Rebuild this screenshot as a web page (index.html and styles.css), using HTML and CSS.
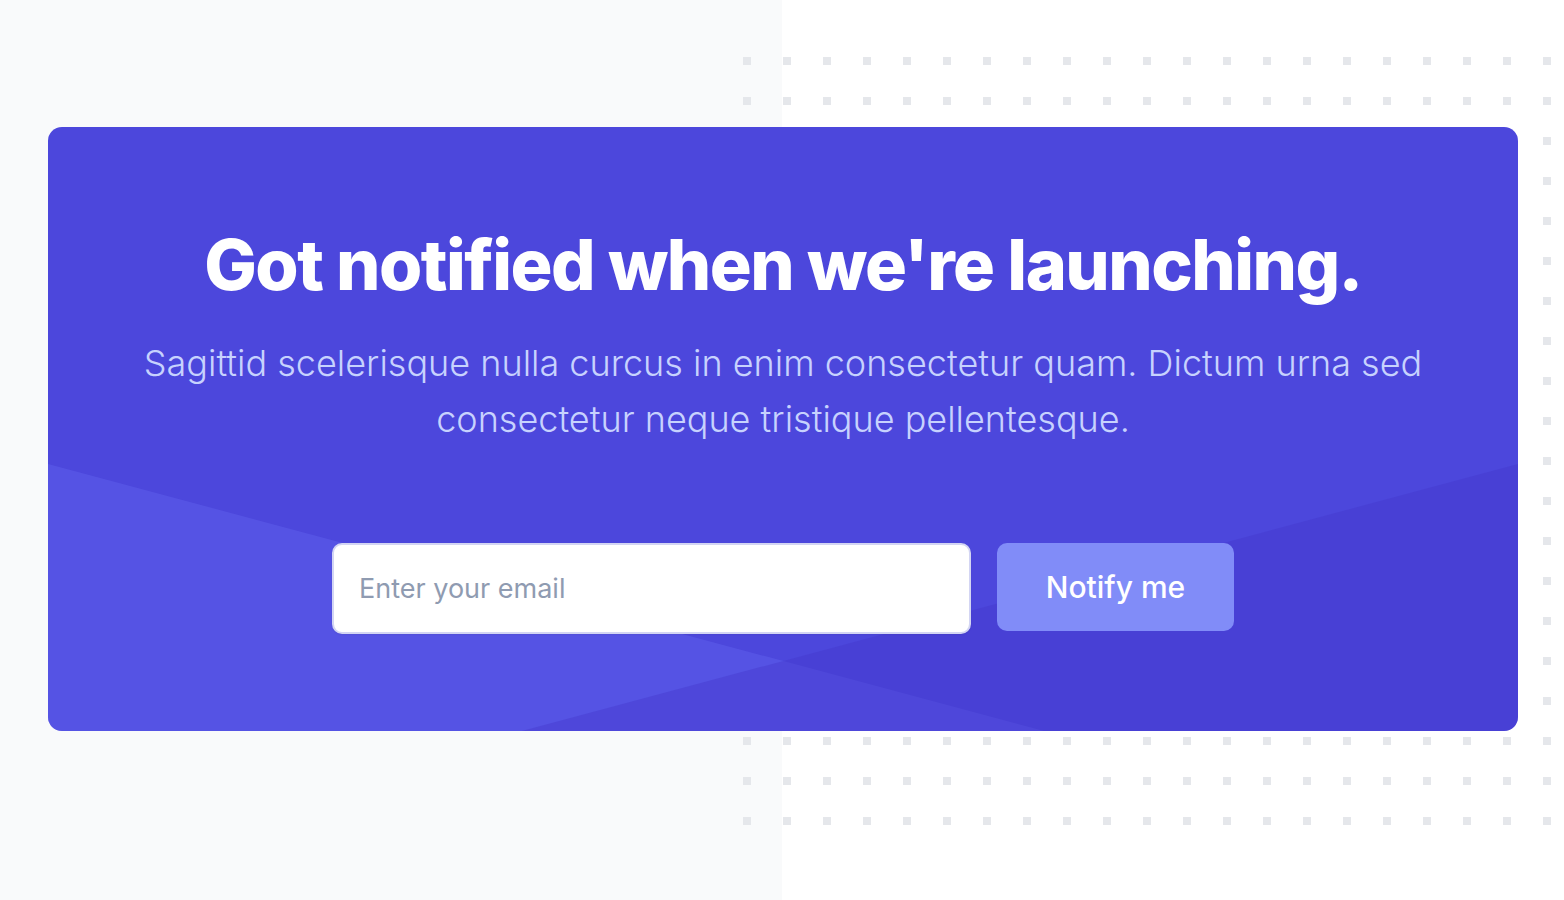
FILE: index.html
```html
<!DOCTYPE html>
<html lang="en">
<head>
<meta charset="utf-8">
<title>Launch notification</title>
<link rel="stylesheet" href="styles.css">
</head>
<body>
<div class="page">
  <svg class="dots" aria-hidden="true" width="821" height="768">
    <defs>
      <pattern id="dotgrid" x="0" y="0" width="40" height="40" patternUnits="userSpaceOnUse">
        <rect x="0" y="0" width="8" height="8" fill="#e5e7eb"></rect>
      </pattern>
    </defs>
    <rect width="821" height="768" fill="url(#dotgrid)"></rect>
  </svg>
  <section class="cta">
    <svg class="cta-shapes" aria-hidden="true" viewBox="0 0 1470 604" preserveAspectRatio="none">
      <polygon class="shape-light" points="0,337 1470,731 1470,800 0,800"></polygon>
      <polygon class="shape-dark" points="1470,337 1470,800 0,800 0,731"></polygon>
    </svg>
    <div class="cta-content">
      <h2 class="cta-title">Got notified when we're launching.</h2>
      <p class="cta-text">Sagittid scelerisque nulla curcus in enim consectetur quam. Dictum urna sed consectetur neque tristique pellentesque.</p>
      <form class="cta-form" onsubmit="return false;">
        <input class="cta-input" type="email" placeholder="Enter your email" aria-label="Email address">
        <button class="cta-button" type="submit">Notify me</button>
      </form>
    </div>
  </section>
</div>
</body>
</html>
```

FILE: styles.css
```css
* { box-sizing: border-box; }

html, body {
  margin: 0;
  padding: 0;
}

body {
  font-family: Inter, "Noto Sans", "Liberation Sans", sans-serif;
  background: #ffffff;
}

.page {
  position: relative;
  height: 900px;
  overflow: hidden;
  padding: 127px 46px 0 48px;
  background: linear-gradient(to right, #f9fafb 0, #f9fafb 782px, #ffffff 782px, #ffffff 100%);
}

.dots {
  position: absolute;
  left: 743px;
  top: 57px;
  display: block;
}

.cta {
  position: relative;
  height: 604px;
  border-radius: 14px;
  overflow: hidden;
  background: #4c47dc;
}

.cta-shapes {
  position: absolute;
  inset: 0;
  width: 100%;
  height: 100%;
}

.shape-light {
  fill: #6366f1;
  fill-opacity: 0.4;
}

.shape-dark {
  fill: #4338ca;
  fill-opacity: 0.4;
}

.cta-content {
  position: relative;
  display: flex;
  flex-direction: column;
  align-items: center;
  padding-top: 98px;
  text-align: center;
}

.cta-title {
  margin: 0;
  font-size: 70px;
  line-height: 80px;
  font-weight: 800;
  letter-spacing: -0.022em;
  color: #ffffff;
}

.cta-text {
  margin: 30px 0 0;
  max-width: 1300px;
  font-family: "Inter Light", Inter, "Noto Sans", "Liberation Sans", sans-serif;
  font-size: 36px;
  line-height: 56px;
  font-weight: 300;
  color: #c7d2fe;
}

.cta-form {
  margin-top: 96px;
  display: flex;
  align-items: flex-start;
  gap: 26px;
}

.cta-input {
  width: 639px;
  height: 91px;
  padding: 0 25px;
  border: 2px solid #d3d5f3;
  border-radius: 10px;
  background: #ffffff;
  font-family: inherit;
  font-size: 27px;
  color: #111827;
  outline: none;
  box-shadow: 0 1px 2px rgba(0, 0, 0, 0.05);
}

.cta-input::placeholder {
  color: #8f9bb1;
  opacity: 1;
}

.cta-button {
  width: 237px;
  height: 88px;
  border: none;
  border-radius: 10px;
  background: #818cf8;
  font-family: inherit;
  font-size: 30px;
  font-weight: 500;
  color: #ffffff;
  cursor: pointer;
}
```
